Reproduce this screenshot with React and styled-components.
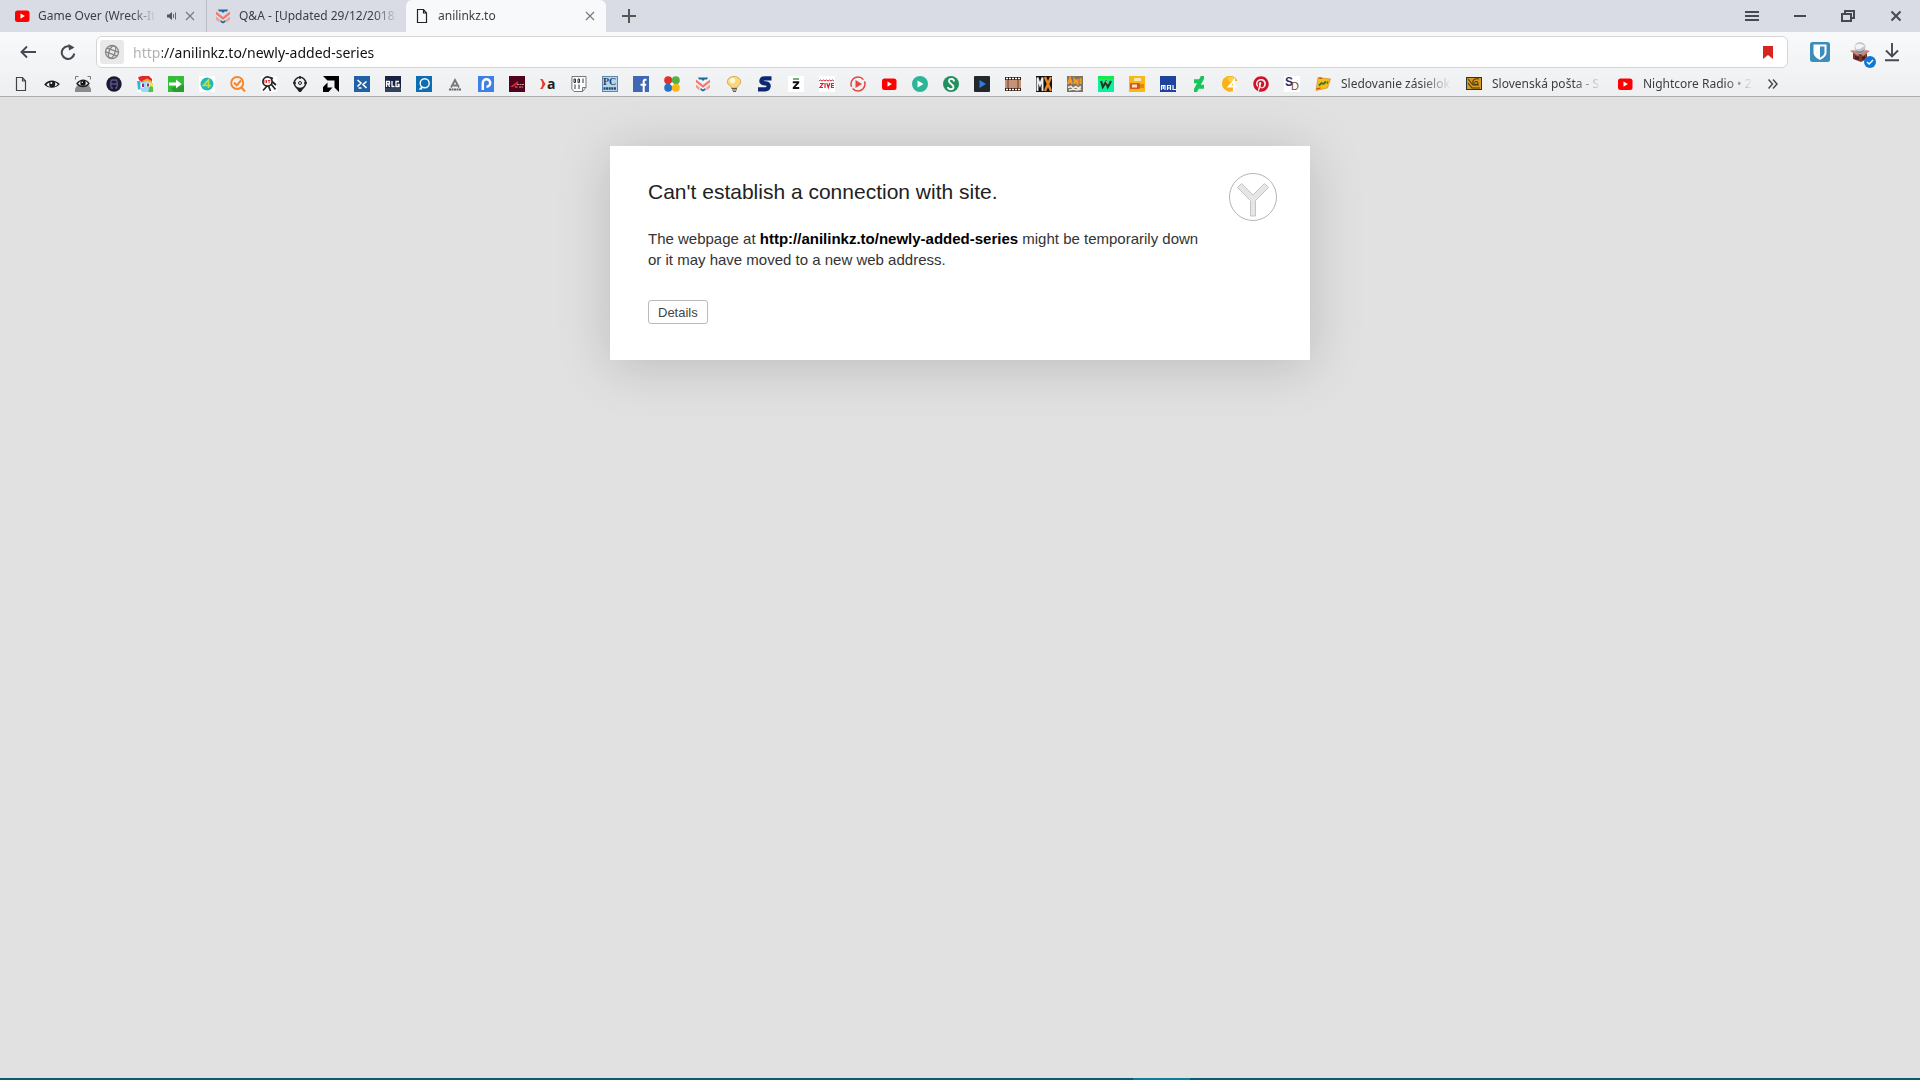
import React, {useState} from 'react';
import styled, {createGlobalStyle} from 'styled-components';
import {FaPinterest, FaDeviantart} from 'react-icons/fa';

const GlobalStyle=createGlobalStyle`
  * {
    box-sizing: border-box;
  }
  body {
    margin: 0;
    background-color: #e1e1e1;
    font-family: "Noto Sans", "Open Sans", sans-serif;
  }
  svg {
    display: block;
    flex: 0 0 auto;
  }
`;

const Icon=({size=16, children})=>(
  <svg width={size} height={size} viewBox={`0 0 ${size} ${size}`} aria-hidden="true">{children}</svg>
);

const PageIcon=({color="#444"})=>(
  <Icon>
    <path d="M3.5 1.5h6l3 3.5v9.5h-9z M9.5 1.5v3.5h3" fill="none" stroke={color} strokeWidth="1.2"/>
  </Icon>
);

const YoutubeIcon=()=>(
  <Icon>
    <rect x="1" y="2.5" width="14.5" height="11.5" rx="2.5" fill="#f00"/>
    <path d="M6.5 5.5v5.2l4.4-2.6z" fill="#fff"/>
  </Icon>
);

const VisorIcon=()=>(
  <Icon>
    <path d="M3 1.500h10l-1 2H9.500L8 5 6.500 3.500H4z" fill="#1c6a96"/>
    <path d="M1 3.500l7 5.500 7-5.500v2.800L8 11.800 1 6.300z" fill="#f0776c"/>
    <path d="M1 8.500l3.500 2.800v3.200L1 11.500z M15 8.500l-3.500 2.800v3.200L15 11.500z" fill="#f59a90"/>
    <path d="M5.500 12l2.500 1.500 2.500-1.500v2L8 15.500 5.500 14z" fill="#1c6a96"/>
  </Icon>
);

const EyeIcon=()=>(
  <Icon>
    <path d="M.2 8.500C4 3.300 11 3 15.800 8c-4 5-11.300 5-15.600.5z" fill="#1b1b1b"/>
    <path d="M2.500 8.700c1-1.300 1.800-1.800 3-2.300-.6 1.500-.4 3.200.6 4.400-1.600-.4-2.600-1-3.600-2.100z M13.800 8.300c-.9-1-1.900-1.700-3-2.100.8 1.500.6 3.300-.5 4.500 1.400-.4 2.500-1.200 3.500-2.400z" fill="#fff"/>
    <circle cx="7.300" cy="7" r="1" fill="#fff"/>
  </Icon>
);

const ScannerIcon=()=>(
  <Icon>
    <path d="M.5 3.500v-3h3 M12.500.5h3v3" fill="none" stroke="#777"/>
    <path d="M2 9.500h12l2 3.500v3H0v-3z" fill="#8c8c8c"/>
    <path d="M2 7.500c3.500-4.500 9-4.500 12 0-3 4-9 4-12 0z" fill="#eee" stroke="#222" strokeWidth="1.300"/>
    <circle cx="8" cy="7" r="2.700" fill="#111"/>
    <circle cx="7.300" cy="6.200" r=".7" fill="#fff"/>
  </Icon>
);

const HelmetIcon=()=>(
  <Icon>
    <circle cx="8" cy="8" r="7.700" fill="#1c1a30"/>
    <path d="M5.500 4h5l1 4-1 4.500M5.500 4l-1 4 1 4.500M4.500 8h7M5.500 12h1.500M9 12h1.500" fill="none" stroke="#5a5288" strokeWidth="1.300"/>
  </Icon>
);

const PonyIcon=()=>(
  <Icon>
    <rect width="16" height="16" fill="#fff"/>
    <path d="M2 5l5-3 7 3 1 8-5 3H5l-3-4z" fill="#9bd8f3"/>
    <path d="M1 1l4-1h7l3 3v3L10 4 5 6 2 4z" fill="#e2252b"/>
    <path d="M5 5l5-2.500 5 2.500v2.500l-5-3-4 1.500z" fill="#f7a31c"/>
    <path d="M12 6l4 1v4l-3-1z" fill="#f4e04a"/>
    <path d="M0 5l3 0v8l-2 1z" fill="#35b6cf"/>
    <path d="M13 10l3 1v5h-5z" fill="#50c34c"/>
    <path d="M4 7h3v4.500H4z M9.500 7h3v4h-3z" fill="#fff"/>
    <path d="M5 7.500h2v3.500H5z M10 7.500h2v3h-2z" fill="#a3266f"/>
  </Icon>
);

const ArrowIcon=()=>(
  <Icon>
    <rect width="16" height="16" fill="#34bd3b"/>
    <path d="M16 9v7H6l-3-4z" fill="#279d2d"/>
    <path d="M1 6.500h7V3.500L13.500 8 8 12.500v-3H1z" fill="#fff"/>
  </Icon>
);

const FourRoundIcon=()=>(
  <Icon>
    <rect width="16" height="16" fill="#fff"/>
    <circle cx="8" cy="8" r="6.500" fill="#20b8b8"/>
    <path d="M9.500 12V4L4.500 9.500H12" fill="none" stroke="#c4df3b" strokeWidth="1.700"/>
  </Icon>
);

const CheckSearchIcon=()=>(
  <Icon>
    <circle cx="7.200" cy="7" r="6" fill="none" stroke="#f5862a" strokeWidth="1.900"/>
    <path d="M11 11l4 4.500 M4 6.500l2.700 2.800L11 4.500" fill="none" stroke="#f5862a" strokeWidth="2"/>
  </Icon>
);

const BugIcon=()=>(
  <Icon>
    <rect width="16" height="16" fill="#fff"/>
    <path d="M2 14.500l5-5.500 M9 1.500l3 1 M7.500 10l2 5 M10 8l4.500 5.500 M11 5.500l4 3.500" stroke="#222" strokeWidth="1.700" fill="none"/>
    <circle cx="6.500" cy="5.500" r="4.600" fill="#fff" stroke="#222" strokeWidth="1.700"/>
    <path d="M4 4v3 M5.500 4v3 M6.800 4.500h2.600 M8.100 4.500v2.800" stroke="#d33" fill="none"/>
  </Icon>
);

const PinIcon=()=>(
  <Icon>
    <path d="M8 0v3 M1 7h3 M12 7h3 M5.500 12.500L8 16l2.500-3.500z" stroke="#222" strokeWidth="1.500" fill="#222"/>
    <circle cx="8" cy="7" r="5.700" fill="none" stroke="#222" strokeWidth="1.600"/>
    <circle cx="8" cy="7" r="1.500" fill="none" stroke="#222"/>
  </Icon>
);

const AmdIcon=()=>(
  <Icon>
    <path d="M0 0h16v16l-4.500-4.500V4.500h-7z" fill="#000"/>
    <path d="M4.500 6.500v5h5L5.500 16H0v-5z" fill="#000"/>
  </Icon>
);

const ConsoleIcon=()=>(
  <Icon>
    <rect width="16" height="16" fill="#2160a5"/>
    <path d="M3.500 4l3.500 3-3.500 3.500 M12.500 5.500l-3.500 3 3.500 3.500 M4.500 12h3" stroke="#fff" strokeWidth="1.600" fill="none"/>
  </Icon>
);

const RlgIcon=()=>(
  <Icon>
    <rect width="16" height="16" fill="#18233f"/>
    <path d="M0 12h16v4H0z" fill="#33415f"/>
    <path d="M1.500 11V5.500h3v2.500h-3m2 0l1 3 M7 5v5.500h2.500 M14 5.500h-3v5h3v-2h-1.500" fill="none" stroke="#fff" strokeWidth="1.300"/>
  </Icon>
);

const LensIcon=()=>(
  <Icon>
    <rect width="16" height="16" fill="#0d6db0"/>
    <circle cx="8.700" cy="7.300" r="4.500" fill="none" stroke="#fff" strokeWidth="1.400"/>
    <path d="M5.500 10.500L2.500 13.500h4z" fill="#fff"/>
  </Icon>
);

const MonumentIcon=()=>(
  <Icon>
    <path d="M4 11.500L8 4l4 7.500 M6 9.500h4" fill="none" stroke="#777" strokeWidth="1.800"/>
    <path d="M2 13.500h12" stroke="#666" strokeWidth="2" strokeDasharray="2 .5"/>
  </Icon>
);

const ParkIcon=()=>(
  <Icon>
    <rect width="16" height="16" fill="#3e80e8"/>
    <path d="M4.800 14V7a3.700 3.700 0 1 1 3.700 3.700" fill="none" stroke="#fff" strokeWidth="2.500"/>
  </Icon>
);

const RedLineIcon=()=>(
  <Icon>
    <rect width="16" height="16" fill="#50031a"/>
    <path d="M1 11l8-6v2.500l-5 3.500z" fill="#e2263b"/>
    <path d="M8 8.500h7 M6 11h3 M10 11h4" stroke="#c99" strokeDasharray="2 .5"/>
  </Icon>
);

const XaIcon=()=>(
  <Icon>
    <path d="M0 3h2.500l3 5-3 5H0c3-3 3-7 0-10z" fill="#e63a35"/>
    <text x="7" y="13" fontFamily="Open Sans, sans-serif" fontSize="14" fontWeight="700" fill="#222">a</text>
  </Icon>
);

const BinaryIcon=()=>(
  <Icon>
    <path d="M1 .5h14v11L11.500 15.500H3L.8 13z M15 11.500h-3.500v4" fill="#fff" stroke="#777"/>
    <path d="M3 3h1.500v3.500H3z M7 3h1.500v3.500H7z M12 2.500V7 M4 8.500V13 M8 8.500V13" fill="none" stroke="#333"/>
  </Icon>
);

const PcIcon=()=>(
  <Icon>
    <rect x=".5" y=".5" width="15" height="15" fill="#b9d5ec" stroke="#5d86a8"/>
    <text x="1" y="9" fontFamily="Liberation Serif, serif" fontSize="10" fontWeight="700" fill="#1d466e">PC</text>
    <path d="M1.500 12.500h13" stroke="#1d466e" strokeWidth="2.400" strokeDasharray="2 .6"/>
  </Icon>
);

const FacebookIcon=()=>(
  <Icon>
    <rect width="16" height="16" fill="#4267b2"/>
    <path d="M13.500 3.700h-1.200c-1.200 0-1.600.6-1.600 1.600V16 M7.500 8.700h5.700" fill="none" stroke="#fff" strokeWidth="2.100"/>
  </Icon>
);

const CloverIcon=()=>(
  <Icon>
    <circle cx="4.200" cy="4.200" r="4" fill="#e0322b"/>
    <circle cx="11.800" cy="4.200" r="4" fill="#55b147"/>
    <circle cx="4.200" cy="11.800" r="4" fill="#2474c6"/>
    <circle cx="11.800" cy="11.800" r="4" fill="#f7b716"/>
    <circle cx="8" cy="8" r="1.600" fill="#fff"/>
  </Icon>
);

const BulbIcon=()=>(
  <Icon>
    <path d="M8 .5c4 0 6.700 2.500 6.700 5.200 0 2.500-2 3.800-3.700 5.300v1H5.500v-1C3.500 9.500 1.300 8.200 1.300 5.700 1.300 3 4 .5 8 .5z" fill="#fbd978" stroke="#c99b4a" strokeWidth=".8"/>
    <circle cx="6.500" cy="4.500" r="2.800" fill="#fff6d5"/>
    <path d="M5.500 12.500h5.500 M6 14h5 M7 15.500h3" stroke="#665a4c"/>
  </Icon>
);

const SwooshIcon=()=>(
  <Icon>
    <path d="M14.500 2.300H7.500C4 2.300 3.200 6.700 6.300 7.100l3.500.5c3 .5 2.300 5.700-1.500 5.700H1" fill="none" stroke="#0b2a73" strokeWidth="4.200"/>
  </Icon>
);

const ZIcon=()=>(
  <Icon>
    <rect width="16" height="16" fill="#fff"/>
    <path d="M4.800 5.200h6.400v1.800L7.500 11h3.700v2H4.800v-1.800L8.500 7.200H4.800z" fill="#111"/>
    <path d="M5 3h6" stroke="#3c8a4b" strokeWidth="1.400"/>
  </Icon>
);

const ZiveIcon=()=>(
  <Icon>
    <rect width="16" height="16" fill="#fff"/>
    <path d="M0 5l1.500-1L3 5l1.500-1L6 5l1.500-1L9 5l1.500-1L12 5l1.500-1L15 5" fill="none" stroke="#d8232f"/>
    <path d="M1 7.500h3L1 11.500h3 M6 7v5 M7.800 7l1.500 4.500L10.800 7 M15 7.500h-2.500v4H15 M12.500 9.500H15" fill="none" stroke="#d8232f" strokeWidth="1.200"/>
  </Icon>
);

const PlayRingIcon=()=>(
  <Icon>
    <circle cx="8" cy="8" r="7" fill="none" stroke="#e5443f" strokeWidth="1.500" strokeDasharray="17 2 20 2"/>
    <path d="M5.500 4v8L12 8z" fill="#e5443f"/>
  </Icon>
);

const PlayTealIcon=()=>(
  <Icon>
    <circle cx="8" cy="8" r="8" fill="#2db597"/>
    <path d="M5.500 4.500v7L11.500 8z" fill="#fff"/>
  </Icon>
);

const SRoundIcon=()=>(
  <Icon>
    <circle cx="8" cy="8" r="8" fill="#23915f"/>
    <path d="M11 5.500C11 2 6 2 6 5s4.500 3 4.500 6-5.500 3-5.500 0" fill="none" stroke="#fff" strokeWidth="1.800"/>
  </Icon>
);

const PlayDarkIcon=()=>(
  <Icon>
    <rect width="16" height="16" rx="1" fill="#23272e"/>
    <path d="M5.500 4v8L12 8z" fill="#2b7de0"/>
  </Icon>
);

const FilmIcon=()=>(
  <Icon>
    <rect y="1" width="16" height="14" fill="#3a1f16"/>
    <rect y="4" width="16" height="8" fill="#c79378"/>
    <path d="M3 4v8 M13 4v8" stroke="#6b3f2c"/>
    <path d="M1 2.500h15 M1 13.500h15" stroke="#fff" strokeWidth="1.500" strokeDasharray="2 1"/>
  </Icon>
);

const MxIcon=()=>(
  <Icon>
    <rect width="16" height="16" fill="#15130f"/>
    <path d="M1.500 15V1.500L4 9l2.500-7.500V15" fill="none" stroke="#eee" strokeWidth="1.900"/>
    <path d="M9 1l6 14 M15 1L9 15" stroke="#e98a2a" strokeWidth="2.400"/>
  </Icon>
);

const AniIcon=()=>(
  <Icon>
    <rect width="16" height="16" fill="#7d7468"/>
    <path d="M1 8l2-6 2 6M2 6h3 M7.500 8V3.500l3 4V3 M13.500 2v6" fill="none" stroke="#f79a21" strokeWidth="2"/>
    <path d="M1 11.500l3-1 2 2 3-2 2 2 3-2 M2 14l4-1 4 1 4-1" fill="none" stroke="#f3eee7" strokeWidth="1.600"/>
  </Icon>
);

const WIcon=()=>(
  <Icon>
    <rect width="16" height="16" fill="#08f2a1"/>
    <path d="M0 0h16v3H0z" fill="#14e84b"/>
    <path d="M3 5l1.800 6L8 6l1.800 5L13 5" fill="none" stroke="#1d3b16" strokeWidth="2.200"/>
    <path d="M8 5l2 3" stroke="#d8b92a" strokeWidth="1.300"/>
  </Icon>
);

const TvIcon=()=>(
  <Icon>
    <rect width="16" height="16" fill="#f9b915"/>
    <rect x="5" y="2" width="7" height="3" fill="#fae7b2"/>
    <rect x="1" y="7" width="10" height="6" rx="1" fill="#d6571c"/>
    <rect x="3" y="8.500" width="5" height="3" fill="#f9e3ba"/>
    <path d="M11 8h4v4h-4z" fill="#ef7f1d"/>
  </Icon>
);

const MalIcon=()=>(
  <Icon>
    <rect width="16" height="16" fill="#1f439c"/>
    <path d="M1.500 14V9.500h3.500V14 M3.300 9.500V13 M7.500 14V9.500h3V14 M7.500 12h3 M13 9v4.500h3" fill="none" stroke="#fff" strokeWidth="1.200"/>
  </Icon>
);

const FourGoldIcon=()=>(
  <Icon>
    <path d="M15.500 5A8 8 0 1 0 13 14V5z" fill="#fbb21a"/>
    <path d="M5 2a8 8 0 0 1 9 1L8 6z" fill="#fdd34b"/>
    <path d="M12 15V4.500L7 10.500h8.500" fill="none" stroke="#fff" strokeWidth="2"/>
  </Icon>
);

const SdIcon=()=>(
  <Icon>
    <rect width="16" height="16" fill="#fff"/>
    <text x="1" y="10" fontFamily="Liberation Sans, sans-serif" fontSize="12" fontWeight="700" fill="#28306b">S</text>
    <text x="7" y="14" fontFamily="Liberation Sans, sans-serif" fontSize="11" fill="#7c4a3c">D</text>
  </Icon>
);

const ParcelIcon=()=>(
  <Icon>
    <path d="M3 1.500L15.500 3 12.500 12 1 14.500z" fill="#f4bf17" stroke="#c9851b" strokeWidth=".6"/>
    <path d="M4 9.500l2.500-2.500 2 1L11 5.500" fill="none" stroke="#2d7a35" strokeWidth="1.800"/>
    <path d="M4 2l3 .4 M13 5l-1 3 M1.500 13l4-1" stroke="#dd3b24" strokeWidth="1.200"/>
  </Icon>
);

const PostIcon=()=>(
  <Icon>
    <rect x=".5" y="1.500" width="15" height="12" fill="#d59a1f" stroke="#26352f"/>
    <path d="M2 3l5 6h6 M13 3c-5-1-7 2-6 4s5 2 5 0-4-2-3 0 M2 7l4 5h8" fill="none" stroke="#4a3910" strokeWidth="1.100"/>
  </Icon>
);

const PinterestIcon=()=><FaPinterest size={16} color="#d3122a"/>;
const DeviantIcon=()=><FaDeviantart size={16} color="#16c65a"/>;

const bookmarks=[
  {name: "Page", icon: PageIcon},
  {name: "Eye", icon: EyeIcon},
  {name: "Scanner", icon: ScannerIcon},
  {name: "Helmet", icon: HelmetIcon},
  {name: "Pony", icon: PonyIcon},
  {name: "Arrow", icon: ArrowIcon},
  {name: "Four", icon: FourRoundIcon},
  {name: "Check search", icon: CheckSearchIcon},
  {name: "Bug", icon: BugIcon},
  {name: "Pin", icon: PinIcon},
  {name: "AMD", icon: AmdIcon},
  {name: "Console", icon: ConsoleIcon},
  {name: "RLG", icon: RlgIcon},
  {name: "Lens", icon: LensIcon},
  {name: "Monument", icon: MonumentIcon},
  {name: "P", icon: ParkIcon},
  {name: "Red line", icon: RedLineIcon},
  {name: "Xa", icon: XaIcon},
  {name: "Binary", icon: BinaryIcon},
  {name: "PC Forum", icon: PcIcon},
  {name: "Facebook", icon: FacebookIcon},
  {name: "Clover", icon: CloverIcon},
  {name: "Q&A", icon: VisorIcon},
  {name: "Bulb", icon: BulbIcon},
  {name: "S", icon: SwooshIcon},
  {name: "Z", icon: ZIcon},
  {name: "Zive", icon: ZiveIcon},
  {name: "Player", icon: PlayRingIcon},
  {name: "YouTube", icon: YoutubeIcon},
  {name: "Teal player", icon: PlayTealIcon},
  {name: "Series", icon: SRoundIcon},
  {name: "Dark player", icon: PlayDarkIcon},
  {name: "Film", icon: FilmIcon},
  {name: "MX", icon: MxIcon},
  {name: "Ani", icon: AniIcon},
  {name: "W", icon: WIcon},
  {name: "TV", icon: TvIcon},
  {name: "MAL", icon: MalIcon},
  {name: "DeviantArt", icon: DeviantIcon},
  {name: "Gold four", icon: FourGoldIcon},
  {name: "Pinterest", icon: PinterestIcon},
  {name: "SD", icon: SdIcon},
  {name: "Parcel", icon: ParcelIcon, label: "Sledovanie zásielok"},
  {name: "Post", icon: PostIcon, label: "Slovenská pošta - S"},
  {name: "Radio", icon: YoutubeIcon, label: "Nightcore Radio • 2"}
];

const CloseIcon=()=>(
  <Icon>
    <path d="M4 4l8 8 M12 4l-8 8" stroke="#777" strokeWidth="1.100"/>
  </Icon>
);

const TabBar=()=>(
  <TabStrip>
    <Tab>
      <YoutubeIcon/>
      <TabTitle>Game Over (Wreck-It</TabTitle>
      <TabActions>
        <TabButton aria-label="Mute tab">
          <Icon>
            <path d="M3 6.500h2L8 4v8L5 9.500H3z" fill="#555"/>
            <path d="M9.500 6v4 M11.500 4.500v7" stroke="#666" fill="none"/>
          </Icon>
        </TabButton>
        <TabButton aria-label="Close tab"><CloseIcon/></TabButton>
      </TabActions>
    </Tab>
    <Tab $divided>
      <VisorIcon/>
      <TabTitle>Q&amp;A - [Updated 29/12/2018</TabTitle>
    </Tab>
    <Tab $active>
      <PageIcon color="#222"/>
      <TabTitle>anilinkz.to</TabTitle>
      <TabActions>
        <TabButton aria-label="Close tab"><CloseIcon/></TabButton>
      </TabActions>
    </Tab>
    <WindowButton aria-label="New tab">
      <Icon><path d="M7 1v14 M0 8h14" stroke="#555" strokeWidth="2"/></Icon>
    </WindowButton>
    <WindowControls>
      <WindowButton aria-label="Menu">
        <Icon><path d="M1 4h14 M1 8h14 M1 12h14" stroke="#454a52" strokeWidth="2"/></Icon>
      </WindowButton>
      <WindowButton aria-label="Minimize">
        <Icon><path d="M2 8h12" stroke="#454a52" strokeWidth="2"/></Icon>
      </WindowButton>
      <WindowButton aria-label="Restore">
        <Icon><path d="M2 6h9v7H2z M5 6V3h9v7h-3" fill="none" stroke="#454a52" strokeWidth="2"/></Icon>
      </WindowButton>
      <WindowButton aria-label="Close">
        <Icon><path d="M3.500 3.500l9 9 M12.500 3.500l-9 9" stroke="#454a52" strokeWidth="2"/></Icon>
      </WindowButton>
    </WindowControls>
  </TabStrip>
);

const Toolbar=()=>{
  const [url, setUrl]=useState("http://anilinkz.to/newly-added-series");
  return(
    <Nav>
      <NavButton aria-label="Back">
        <Icon><path d="M16 8H1.500 M7 2.500L1.500 8 7 13.500" fill="none" stroke="#454a52" strokeWidth="1.900"/></Icon>
      </NavButton>
      <NavButton aria-label="Reload">
        <Icon>
          <path d="M12.600 4.200A6.300 6.300 0 1 0 14.300 9.500" fill="none" stroke="#454a52" strokeWidth="2"/>
          <path d="M8.500 0L14.500 3.500 9 6.500z" fill="#454a52"/>
        </Icon>
      </NavButton>
      <AddressBox>
        <SiteButton aria-label="Site information">
          <Icon>
            <g fill="none" stroke="#858585" strokeWidth="1.300" transform="rotate(20 8 8)">
              <circle cx="8" cy="8" r="6.500"/>
              <ellipse cx="8" cy="8" rx="3" ry="6.500"/>
              <path d="M2 6h12 M2 10h12"/>
            </g>
          </Icon>
        </SiteButton>
        <AddressInput aria-label="Address" value={url} onChange={(e)=>setUrl(e.target.value)}/>
        <NavButton aria-label="Bookmark">
          <Icon><path d="M4 2h10v13L9 11l-5 4z" fill="#d6261f"/></Icon>
        </NavButton>
      </AddressBox>
      <Extensions>
        <NavButton aria-label="Bitwarden">
          <Icon size={20}>
            <rect width="20" height="20" rx="2.500" fill="#3c8dbc"/>
            <path d="M3.500 2.500h13v8c0 3.500-3 5.500-6.500 7.500-3.500-2-6.500-4-6.500-7.500z" fill="#fff"/>
            <path d="M10 4.500h4.500v6c0 2.200-2 3.800-4.500 5.200z" fill="#3c8dbc"/>
          </Icon>
        </NavButton>
        <NavButton aria-label="Package extension">
          <Icon size={20}>
            <path d="M3 10l7 2 7-2v7l-6 3-8-3z" fill="#7d3931"/>
            <path d="M0 9l3-1 7 3-2 3z M20 9l-4-1-6 3 3 3z" fill="#c8857a"/>
            <path d="M5 14l4 1v3l-4-1z M12 15l3-1v3l-3 1z" fill="#45201d"/>
            <circle cx="10" cy="5.500" r="5.500" fill="#c3c7cb"/>
            <path d="M5 4c3-3 7-3 10 1-3-1-4 3-9 2z" fill="#f4f5f6"/>
            <path d="M5 8c3 2 7 2 10-1-1 4-7 6-10 1z" fill="#777c82"/>
          </Icon>
          <Badge>
            <svg width="8" height="8" viewBox="0 0 8 8"><path d="M1 4l2.200 2L7 2" fill="none" stroke="#fff" strokeWidth="1.400"/></svg>
          </Badge>
        </NavButton>
        <DownloadButton aria-label="Downloads">
          <Icon size={20}><path d="M10 1v13 M4 8.500l6 6 6-6 M3 18.200h14" fill="none" stroke="#454a52" strokeWidth="1.900"/></Icon>
        </DownloadButton>
      </Extensions>
    </Nav>
  );
};

const BookmarksBar=()=>(
  <Bookmarks aria-label="Bookmarks">
    {bookmarks.map(({name, icon: BookmarkIcon, label})=>(
      <Bookmark key={name} href="#" aria-label={label || name}>
        <BookmarkIcon/>
        {label && <BookmarkLabel>{label}</BookmarkLabel>}
      </Bookmark>
    ))}
    <TabButton aria-label="More bookmarks">
      <Icon><path d="M.5 3.500L4.500 8l-4 4.500 M5 3.500L9 8l-4 4.500" fill="none" stroke="#444" strokeWidth="1.400"/></Icon>
    </TabButton>
  </Bookmarks>
);

const ErrorCard=()=>(
  <Card>
    <Message>
      <Title>Can't establish a connection with site.</Title>
      <Text>
        The webpage at <b>http://anilinkz.to/newly-added-series</b> might be temporarily down or it may have moved to a new web address.
      </Text>
      <DetailsButton>Details</DetailsButton>
    </Message>
    <Icon size={48}>
      <circle cx="24" cy="24" r="23.500" fill="#fff" stroke="#b5b5b5"/>
      <path d="M8.500 14.500L12.500 10.500 24 22 35.500 10.500 39.500 14.500 26.500 27.500V43h-5V27.500z" fill="#e6e6e6" stroke="#c4c4c4" strokeLinejoin="round"/>
    </Icon>
  </Card>
);

export default function App(){
  return(
    <Window>
      <GlobalStyle/>
      <header>
        <TabBar/>
        <Chrome>
          <Toolbar/>
          <BookmarksBar/>
        </Chrome>
      </header>
      <Page>
        <ErrorCard/>
      </Page>
      <Taskbar><TaskbarItem/></Taskbar>
    </Window>
  );
}

const Window=styled.div`
  display: flex;
  flex-direction: column;
  min-height: 100vh;
`;

const TabStrip=styled.div`
  display: flex;
  height: 32px;
  padding-left: 6px;
  background-color: #d9dce4;
`;

const Tab=styled.div`
  display: flex;
  align-items: center;
  gap: 8px;
  width: 200px;
  padding: 0 8px;
  border-radius: ${({$active})=>$active ? "6px 6px 0 0" : "0"};
  background-color: ${({$active})=>$active ? "#f8f9fb" : "transparent"};
  border-left: ${({$divided})=>$divided ? "1px solid #b9bcc4" : "0"};
`;

const TabTitle=styled.span`
  flex: 1 1 0;
  overflow: hidden;
  white-space: nowrap;
  font-size: 12px;
  line-height: 20px;
  color: #3c3e42;
  mask-image: linear-gradient(to left, transparent, #000 24px);
`;

const TabActions=styled.div`
  display: flex;
  gap: 2px;
`;

const PlainButton=styled.button`
  display: flex;
  align-items: center;
  justify-content: center;
  flex: 0 0 auto;
  padding: 0;
  border: 0;
  background: none;
`;

const TabButton=styled(PlainButton)`
  width: 16px;
  height: 16px;
`;

const WindowButton=styled(PlainButton)`
  width: 48px;
  height: 32px;
`;

const WindowControls=styled.div`
  display: flex;
  margin-left: auto;
`;

const Chrome=styled.div`
  background: linear-gradient(#f8f9fb, #eeeff1);
  border-bottom: 1px solid #adadad;
`;

const Nav=styled.div`
  display: flex;
  align-items: center;
  height: 40px;
  padding: 0 16px 0 8px;
`;

const NavButton=styled(PlainButton)`
  position: relative;
  width: 40px;
  height: 32px;
`;

const DownloadButton=styled(NavButton)`
  width: 24px;
`;

const AddressBox=styled.div`
  display: flex;
  align-items: center;
  flex: 1 1 auto;
  height: 32px;
  margin: 0 12px 0 8px;
  padding-left: 3px;
  border: 1px solid #d5d6d8;
  border-radius: 6px;
  background-color: #fff;
`;

const SiteButton=styled(PlainButton)`
  width: 24px;
  height: 24px;
  border-radius: 3px;
  background-color: #e9e9e9;
`;

/* the scheme is painted lighter than the rest of the address */
const AddressInput=styled.input`
  flex: 1 1 auto;
  min-width: 0;
  height: 24px;
  margin-left: 9px;
  padding: 0;
  border: 0;
  outline: none;
  font-family: inherit;
  font-size: 14px;
  background: linear-gradient(to right, #b0b0b0 29px, #111 29px);
  background-clip: text;
  -webkit-text-fill-color: transparent;
`;

const Extensions=styled.div`
  display: flex;
`;

const Badge=styled.span`
  position: absolute;
  right: 4px;
  bottom: 0;
  display: flex;
  align-items: center;
  justify-content: center;
  width: 12px;
  height: 12px;
  border-radius: 50%;
  background-color: #0f78d4;
`;

const Bookmarks=styled.nav`
  display: flex;
  align-items: center;
  gap: 15px;
  height: 24px;
  padding-left: 13px;
`;

const Bookmark=styled.a`
  display: flex;
  align-items: center;
  gap: 10px;
  color: #3c3e42;
  text-decoration: none;
`;

const BookmarkLabel=styled.span`
  width: 110px;
  overflow: hidden;
  white-space: nowrap;
  font-size: 12px;
  line-height: 20px;
  mask-image: linear-gradient(to left, transparent, #000 28px);
`;

const Page=styled.main`
  flex: 1 1 auto;
  padding: 49px 16px;
  background-color: #e1e1e1;
`;

const Card=styled.section`
  display: flex;
  justify-content: space-between;
  max-width: 700px;
  margin: 0 auto;
  padding: 27px 33px 36px 38px;
  background-color: #fff;
  box-shadow: 0 6px 50px rgba(0, 0, 0, 0.17);
  font-family: "Liberation Sans", Arial, sans-serif;
`;

const Message=styled.div`
  max-width: 556px;
`;

const Title=styled.h1`
  margin: 6px 0 23px;
  font-size: 21px;
  font-weight: normal;
  line-height: 26px;
  color: #222;
`;

const Text=styled.p`
  margin: 0 0 30px;
  font-size: 15px;
  line-height: 21px;
  color: #333;

  b {
    color: #000;
  }
`;

const DetailsButton=styled.button`
  height: 24px;
  padding: 0 9px;
  border: 1px solid #bbb;
  border-radius: 3px;
  background-color: #fff;
  font-family: inherit;
  font-size: 13px;
  color: #444;
`;

const Taskbar=styled.footer`
  height: 2px;
  background-color: #0b5c6b;
`;

const TaskbarItem=styled.div`
  width: 3%;
  height: 2px;
  margin-left: 59%;
  background-color: #0c7f95;
`;
